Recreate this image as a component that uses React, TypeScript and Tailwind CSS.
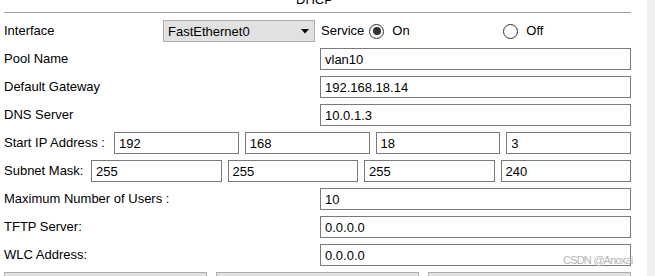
import React from 'react';

function Field({ value, className = '' }: { value: string; className?: string }) {
  return (
    <div className={`h-[22px] border border-[#7a7a7a] bg-white pl-[4px] flex items-center leading-none ${className}`}>
      {value}
    </div>
  );
}

function Radio({ checked }: { checked?: boolean }) {
  return (
    <div className="w-[15px] h-[15px] rounded-full border border-[#333333] bg-white flex items-center justify-center shrink-0">
      {checked && <div className="w-[8px] h-[8px] rounded-full bg-[#333333]" />}
    </div>
  );
}

function Row({ label, value }: { label: string; value: string }) {
  return (
    <div className="flex items-center h-[22px]">
      <div className="w-[316px] shrink-0">{label}</div>
      <Field value={value} className="flex-1" />
    </div>
  );
}

export default function App() {
  return (
    <div
      className="relative w-[655px] h-[276px] flex bg-white overflow-hidden text-[13px] text-black"
      style={{ fontFamily: '"Liberation Sans", Arial, sans-serif' }}
    >
      {/* Main panel */}
      <div className="w-[647px] shrink-0 pl-[4px] pr-[16px] overflow-hidden">
        {/* Title */}
        <div className="h-[13px] border-b border-[#a0a0a0] flex justify-center pr-[6px]">
          <span className="block leading-[13px] mt-[-7px]">DHCP</span>
        </div>

        {/* Interface / Service */}
        <div className="mt-[7px] flex items-center h-[22px]">
          <div className="w-[159px] shrink-0">Interface</div>
          <div className="w-[152px] h-[22px] shrink-0 bg-[#e1e1e1] border border-[#adadad] flex items-center pl-[4px] pr-[5px]">
            <span className="flex-1 leading-none">FastEthernet0</span>
            <svg width="8" height="5" viewBox="0 0 8 5">
              <path d="M0 0 H8 L4 4.5 Z" fill="#000" />
            </svg>
          </div>
          <div className="ml-[6px] shrink-0">Service</div>
          <div className="ml-[5px] w-[134px] flex items-center shrink-0">
            <Radio checked />
            <span className="ml-[8px]">On</span>
          </div>
          <div className="flex items-center">
            <Radio />
            <span className="ml-[8px]">Off</span>
          </div>
        </div>

        <div className="mt-[6px] flex flex-col gap-[6px]">
          <Row label="Pool Name" value="vlan10" />
          <Row label="Default Gateway" value="192.168.18.14" />
          <Row label="DNS Server" value="10.0.1.3" />

          {/* Start IP */}
          <div className="flex items-center h-[22px]">
            <div className="w-[110px] shrink-0">Start IP Address :</div>
            <div className="flex-1 flex gap-[6px]">
              <Field value="192" className="flex-1" />
              <Field value="168" className="flex-1" />
              <Field value="18" className="flex-1" />
              <Field value="3" className="flex-1" />
            </div>
          </div>

          {/* Subnet Mask */}
          <div className="flex items-center h-[22px]">
            <div className="w-[87px] shrink-0">Subnet Mask:</div>
            <div className="flex-1 flex gap-[6px]">
              <Field value="255" className="flex-1" />
              <Field value="255" className="flex-1" />
              <Field value="255" className="flex-1" />
              <Field value="240" className="flex-1" />
            </div>
          </div>

          <Row label="Maximum Number of Users :" value="10" />
          <Row label="TFTP Server:" value="0.0.0.0" />
          <Row label="WLC Address:" value="0.0.0.0" />

          {/* Buttons (cut off) */}
          <div className="flex gap-[9px] h-[22px]">
            <div className="flex-1 bg-[#e1e1e1] border border-[#adadad]" />
            <div className="flex-1 bg-[#e1e1e1] border border-[#adadad]" />
            <div className="flex-1 bg-[#e1e1e1] border border-[#adadad]" />
          </div>
        </div>
      </div>

      {/* Right strip */}
      <div className="flex-1 bg-[#f0f0f0]" />

      {/* Watermark */}
      <div className="absolute left-[563px] top-[254px] text-[11px] tracking-[-0.8px] text-[#b4b4b4] leading-[13px]">
        CSDN @Anoxai
      </div>
    </div>
  );
}
